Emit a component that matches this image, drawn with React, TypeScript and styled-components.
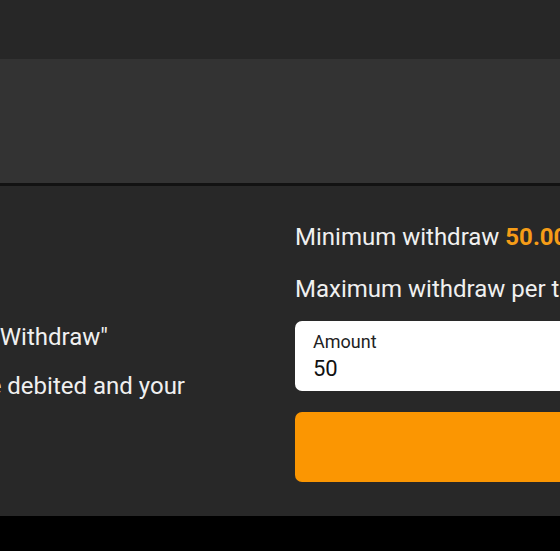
import React from "react";
import styled, { createGlobalStyle } from "styled-components";

const GlobalStyle = createGlobalStyle`
  html, body {
    margin: 0;
    padding: 0;
    background: #ffffff;
    overflow: hidden;
  }
  body {
    font-family: Roboto, "Liberation Sans", Arial, sans-serif;
  }
  * { box-sizing: border-box; }
`;

const Page = styled.div`
  width: 560px;
  overflow: hidden;
  display: flex;
  flex-direction: column;
`;

const TopBar = styled.header`
  height: 59px;
  background: #272727;
`;

const Banner = styled.section`
  height: 127px;
  background: #333333;
  border-bottom: 3px solid #121212;
`;

const Main = styled.main`
  height: 330px;
  background: #282828;
  display: flex;
  color: #f0f0f0;
  font-size: 24px;
  line-height: 28px;
`;

const Steps = styled.div`
  flex: 0 0 295px;
  display: flex;
  flex-direction: column;
  align-items: flex-start;
  gap: 21px;
  padding-top: 137px;
`;

const Step = styled.p<{ $end: number }>`
  margin: 0;
  width: ${(p) => p.$end}px;
  display: flex;
  justify-content: flex-end;
  white-space: nowrap;
`;

const Form = styled.div`
  flex: 0 0 700px;
  display: flex;
  flex-direction: column;
  padding-top: 37px;
`;

const Limit = styled.p`
  margin: 0 0 24px;
  white-space: nowrap;
  &:last-of-type {
    margin-bottom: 18px;
  }
`;

const Highlight = styled.span`
  color: #f59c17;
  font-weight: 700;
`;

const Field = styled.label`
  height: 70px;
  background: #ffffff;
  border-radius: 7px;
  padding: 11px 18px 0;
  display: flex;
  flex-direction: column;
  gap: 4px;
`;

const FieldLabel = styled.span`
  font-size: 18px;
  line-height: 20px;
  color: #222222;
`;

const FieldValue = styled.input`
  border: none;
  outline: none;
  padding: 0;
  margin: 0;
  background: transparent;
  font-family: inherit;
  font-size: 22px;
  line-height: 26px;
  height: 26px;
  color: #111111;
`;

const SubmitButton = styled.button`
  margin-top: 21px;
  height: 70px;
  border: none;
  border-radius: 7px;
  background: #fb9602;
  color: #1f1f1f;
  font-family: inherit;
  font-size: 22px;
  font-weight: 700;
`;

const Footer = styled.footer`
  height: 35px;
  background: #000000;
`;

export default function App() {
  return (
    <>
      <GlobalStyle />
      <Page>
        <TopBar />
        <Banner />
        <Main>
          <Steps>
            <Step $end={108}>1. Enter the amount you want and click "Withdraw"</Step>
            <Step $end={185}>2. The amount will be debited and your</Step>
          </Steps>
          <Form>
            <Limit>
              Minimum withdraw <Highlight>50.00 EUR</Highlight>
            </Limit>
            <Limit>
              Maximum withdraw per transaction <Highlight>5,000.00 EUR</Highlight>
            </Limit>
            <Field>
              <FieldLabel>Amount</FieldLabel>
              <FieldValue defaultValue="50" />
            </Field>
            <SubmitButton>Withdraw</SubmitButton>
          </Form>
        </Main>
        <Footer />
      </Page>
    </>
  );
}
